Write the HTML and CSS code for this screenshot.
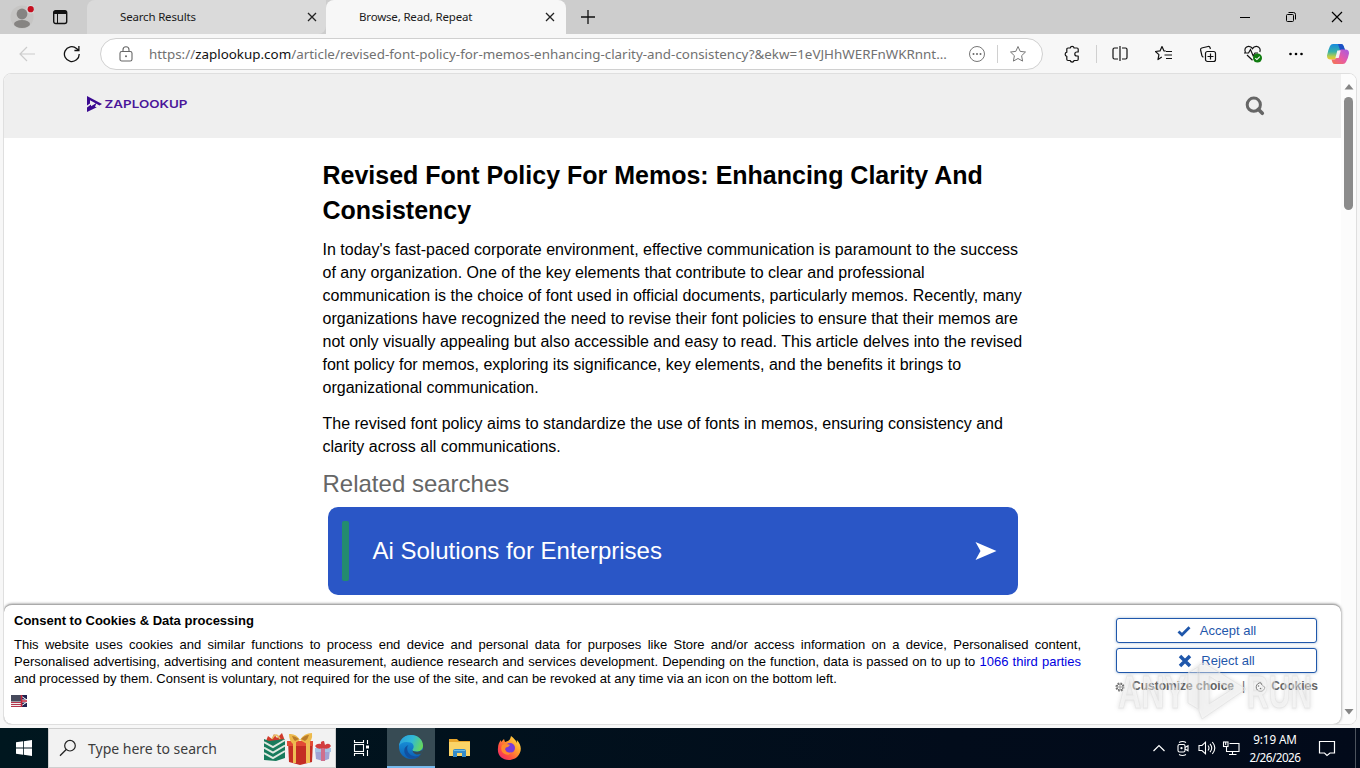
FILE: index.html
```html
<!DOCTYPE html>
<html lang="en">
<head>
    <meta charset="UTF-8">
    <meta name="viewport" content="width=device-width, initial-scale=1.0">
    <title>Browse, Read, Repeat</title>
    <link rel="stylesheet" href="styles.css">
</head>
<body>
    <div class="tabs">
        <div class="tabs-left">
            <svg class="profile" width="24" height="26" viewBox="0 0 24 26"><circle cx="12" cy="13" r="11.500" fill="#c6c5c4"/><circle cx="12" cy="10" r="5.400" fill="#868482"/><ellipse cx="12" cy="20" rx="8" ry="4" fill="#868482"/><circle cx="20.700" cy="5.200" r="4.200" fill="#dadada"/><circle cx="20.700" cy="5.200" r="3.100" fill="#c50f1f"/></svg>
            <svg width="16" height="16" viewBox="0 0 16 16"><rect x="1.700" y="1.700" width="13" height="12.800" rx="2" fill="none" stroke="#111" stroke-width="1.400"/><path d="M1.500 5V3.500q0-2 2-2h9.500q2 0 2 2V5z" fill="#111"/><path d="M5.500 5v9" stroke="#111"/></svg>
        </div>
        <div class="tab tab-idle">
            <span class="tab-title">Search Results</span>
            <svg width="10" height="10" viewBox="0 0 10 10"><path d="M1 1l8 8M9 1L1 9" stroke="#222" stroke-width="1.300"/></svg>
        </div>
        <div class="tab tab-active">
            <span class="tab-title">Browse, Read, Repeat</span>
            <svg width="10" height="10" viewBox="0 0 10 10"><path d="M1 1l8 8M9 1L1 9" stroke="#222" stroke-width="1.300"/></svg>
        </div>
        <div class="tabs-rest">
            <svg width="14" height="14" viewBox="0 0 14 14"><path d="M7 0v14M0 7h14" stroke="#111" stroke-width="1.300"/></svg>
        </div>
        <div class="window-buttons">
            <svg width="46" height="34" viewBox="0 0 46 34"><path d="M18 17.500h10" stroke="#000"/></svg>
            <svg width="46" height="34" viewBox="0 0 46 34"><rect x="18.500" y="14.500" width="7" height="7" rx="1" fill="none" stroke="#000"/><path d="M20.500 12.500h5q2 0 2 2v5" fill="none" stroke="#000"/></svg>
            <svg width="46" height="34" viewBox="0 0 46 34"><path d="M18 12l10 10M28 12L18 22" stroke="#000" stroke-width="1.200"/></svg>
        </div>
    </div>

    <div class="toolbar">
        <svg class="nav-icon" width="18" height="16" viewBox="0 0 18 16"><path d="M8 1L1 8l7 7M1.500 8H16" fill="none" stroke="#ccc" stroke-width="1.200"/></svg>
        <svg class="nav-icon" width="18" height="18" viewBox="0 0 18 18"><path d="M16.200 9A7.400 7.400 0 1 1 13.500 3.400L15.800 5.300M15.900 1v4.500h-4.500" fill="none" stroke="#111" stroke-width="1.300"/></svg>
        <div class="address">
            <svg width="14" height="16" viewBox="0 0 14 16"><rect x="1" y="5.500" width="12" height="9.500" rx="1.800" fill="none" stroke="#666" stroke-width="1.100"/><path d="M4 5.500V3.800a3 3 0 0 1 6 0v1.700" fill="none" stroke="#666" stroke-width="1.100"/><circle cx="7" cy="10.200" r="1" fill="#666"/></svg>
            <span class="url">https://<b>zaplookup.com</b>/article/revised-font-policy-for-memos-enhancing-clarity-and-consistency?&amp;ekw=1eVJHhWERFnWKRnnt...</span>
            <svg width="18" height="18" viewBox="0 0 18 18"><circle cx="9" cy="9" r="7.500" fill="none" stroke="#777"/><g fill="#666"><circle cx="5.500" cy="9" r="1"/><circle cx="9" cy="9" r="1"/><circle cx="12.500" cy="9" r="1"/></g></svg>
            <i class="divider"></i>
            <svg width="18" height="18" viewBox="0 0 18 18"><path d="M9 1.500l2.200 4.900 5.300.6-3.900 3.700 1 5.400L9 13.500l-4.600 2.600 1-5.400L1.500 7l5.300-.6z" fill="none" stroke="#777" stroke-linejoin="round"/></svg>
        </div>
        <div class="tools">
            <svg width="18" height="18" viewBox="0 0 18 18"><path d="M5 3h2.200a2 2 0 0 1 3.900 0H14q1.200 0 1.200 1.200V7h-1.400a2 2 0 0 0 0 4h1.400v3.300q0 1.200-1.200 1.200h-2.900a2 2 0 0 1-3.900 0H5q-1.200 0-1.200-1.200V11.300a2.100 2.100 0 0 1 0-4.100V4.200Q3.800 3 5 3z" fill="none" stroke="#111" stroke-width="1.200" stroke-linejoin="round"/></svg>
            <i class="divider"></i>
            <svg width="18" height="18" viewBox="0 0 18 18"><path d="M7 3H3.500Q2 3 2 4.500v8Q2 14 3.500 14H7M11 3h3.500Q16 3 16 4.500v8q0 1.500-1.500 1.500H11M9 1v15" fill="none" stroke="#111" stroke-width="1.200"/></svg>
            <svg width="18" height="18" viewBox="0 0 18 18"><path d="M10.800 6L8.900 5.800 7 1.500 5 5.900l-4.500.6 3.400 3.100-.9 5L6.800 12M11 6.500h6M9.500 10h7.500M11 13.500h6" fill="none" stroke="#111" stroke-width="1.200" stroke-linejoin="round"/></svg>
            <svg width="18" height="18" viewBox="0 0 18 18"><rect x="6.500" y="6.500" width="10" height="10" rx="2" fill="none" stroke="#111" stroke-width="1.200"/><path d="M11.500 8.500v6M8.500 11.500h6M4.500 12Q3.300 12 2.900 10.600L1.600 5Q1.200 3.400 2.700 3L9 1.500q1.600-.4 2.100 1.200l.3 1.300" fill="none" stroke="#111" stroke-width="1.200"/></svg>
            <svg class="health" width="20" height="20" viewBox="0 0 20 20"><path d="M2.400 8.500C1 5.500 2.500 2.500 5.500 2.300 7.700 2.200 9 3.700 9.500 4.600c.5-.9 1.900-2.400 4-2.300 3 .2 4.400 3 3.300 5.700M4 11l5.500 5.300M1 9h4.500l2-3.500 2.700 6.500 1.800-3h3" fill="none" stroke="#111" stroke-width="1.200"/><circle cx="14.500" cy="14" r="4.500" fill="#107c10"/><path d="M12.300 14.100l1.600 1.500 2.900-3" fill="none" stroke="#fff" stroke-width="1.100"/></svg>
            <svg width="18" height="18" viewBox="0 0 18 18"><circle cx="3.500" cy="9" r="1.300"/><circle cx="9" cy="9" r="1.300"/><circle cx="14.500" cy="9" r="1.300"/></svg>
            <svg class="copilot" width="24" height="22" viewBox="0 0 24 22">
                <defs>
                    <linearGradient id="cool" x1="0" y1="0" x2="0" y2="1"><stop offset="0" stop-color="#168adf"/><stop offset=".5" stop-color="#38b2a8"/><stop offset=".8" stop-color="#b7ce4c"/><stop offset="1" stop-color="#f5c431"/></linearGradient>
                    <linearGradient id="warm" x1="1" y1="0" x2="0" y2="1"><stop offset="0" stop-color="#a35be5"/><stop offset=".5" stop-color="#e65aa8"/><stop offset="1" stop-color="#f6784a"/></linearGradient>
                </defs>
                <path d="M7 1h8q2 0 2.600 2L19 7h-4q-2 0-2.600 2l-1.600 5q-.8 2.500-3 2.500H4.500Q.8 16.500 1 12.500 2 7 4 3q1-2 3-2z" fill="url(#cool)"/>
                <path d="M12 1h3q2 0 2.600 2L19 7h-5z" fill="#1c50c5"/>
                <path d="M17 21H9q-2 0-2.500-1.500l-1-3H8q2 0 2.700-2.200L12.500 9Q13 6.800 15 6.500h4.500q3.700 0 3.500 4Q22 16 20 19q-1 2-3 2z" fill="url(#warm)"/>
                <path d="M11.300 7.500h3.400l-2 7.500H9.400z" fill="#f5eff5"/>
            </svg>
        </div>
    </div>

    <div class="viewport">
        <div class="page">
            <header class="site-header">
                <svg width="102" height="18" viewBox="0 0 102 18">
                    <path d="M1 1l15 8-2.500 1.400L4 5.200v3.300L1 10.500zM1 17v-4.500l4-3v1.800l5.500-3.200-1.500 3.600 1.800.6z" fill="#3b0a91"/>
                    <text class="logo-text" x="18.500" y="12.800" textLength="83" lengthAdjust="spacingAndGlyphs">ZAPLOOKUP</text>
                </svg>
                <svg class="search-icon" width="20" height="20" viewBox="0 0 20 20"><circle cx="8.800" cy="8.700" r="6.600" fill="none" stroke="#666" stroke-width="3"/><path d="M13.300 13.300l4 4" stroke="#666" stroke-width="3.600" stroke-linecap="round"/></svg>
            </header>
            <main>
                <h1>Revised Font Policy For Memos: Enhancing Clarity And<br>Consistency</h1>
                <p>In today's fast-paced corporate environment, effective communication is paramount to the success<br>
                of any organization. One of the key elements that contribute to clear and professional<br>
                communication is the choice of font used in official documents, particularly memos. Recently, many<br>
                organizations have recognized the need to revise their font policies to ensure that their memos are<br>
                not only visually appealing but also accessible and easy to read. This article delves into the revised<br>
                font policy for memos, exploring its significance, key elements, and the benefits it brings to<br>
                organizational communication.</p>
                <p>The revised font policy aims to standardize the use of fonts in memos, ensuring consistency and<br>
                clarity across all communications.</p>
                <div class="related">Related searches</div>
                <a class="search-link">
                    <span class="link-bar"></span>
                    <span class="link-text">Ai Solutions for Enterprises</span>
                    <svg width="22" height="18" viewBox="0 0 22 18"><path d="M.5 0l21 9-21 9 5-9z" fill="#fff"/></svg>
                </a>
            </main>
        </div>
        <div class="scrollbar">
            <svg width="10" height="6" viewBox="0 0 10 6"><path d="M5 0l4.500 5.500h-9z" fill="#858585"/></svg>
            <span class="thumb"></span>
            <svg class="arrow-down" width="10" height="6" viewBox="0 0 10 6"><path d="M.5 0h9L5 5.500z" fill="#858585"/></svg>
        </div>

        <div class="consent">
            <div class="consent-text">
                <b>Consent to Cookies &amp; Data processing</b>
                <div class="consent-line">This website uses cookies and similar functions to process end device and personal data for purposes like Store and/or access information on a device, Personalised content,</div>
                <div class="consent-line">Personalised advertising, advertising and content measurement, audience research and services development. Depending on the function, data is passed on to up to <a>1066 third parties</a></div>
                <div>and processed by them. Consent is voluntary, not required for the use of the site, and can be revoked at any time via an icon on the bottom left.</div>
                <svg class="flag" width="16" height="12" viewBox="0 0 16 12"><rect width="16" height="12" fill="#eee"/><path d="M0 7.500h10M0 9.500h10M0 11.500h10" stroke="#b5354c"/><rect width="10" height="6.500" fill="#474a5c"/><rect x="10" width="6" height="12" fill="#20224f"/><path d="M10 1l6 4M10 11l6-4" stroke="#fff"/><path d="M10 6h6" stroke="#fff" stroke-width="3"/><path d="M10 6h6M10.500 0v12" stroke="#c52338" stroke-width="1.500"/></svg>
            </div>
            <div class="consent-buttons">
                <button><svg width="14" height="12" viewBox="0 0 14 12"><path d="M1.500 6.500L5 9.800l7.500-7.500" fill="none" stroke="#1f57ab" stroke-width="2.800"/></svg><span>Accept all</span></button>
                <button><svg width="14" height="14" viewBox="0 0 14 14"><path d="M2 2l10 10M12 2L2 12" stroke="#1f57ab" stroke-width="3.500"/></svg><span>Reject all</span></button>
                <div class="choices">
                    <svg width="10" height="10" viewBox="0 0 10 10"><circle cx="5" cy="5" r="3.900" fill="none" stroke="#777" stroke-width="1.400" stroke-dasharray="1.800 1.260"/><circle cx="5" cy="5" r="3" fill="none" stroke="#777"/><circle cx="5" cy="5" r="1.200" fill="none" stroke="#777" stroke-width=".8"/></svg>
                    <span class="customize">Customize choice</span>
                    <span class="pipe">|</span>
                    <svg width="11" height="10" viewBox="0 0 11 10"><path d="M6 .8A4.300 4.300 0 1 0 9.800 5Q8.500 5 8 3.500 6.200 3 6 .8z" fill="none" stroke="#777"/><circle cx="3.500" cy="4" r=".8" fill="#777"/><circle cx="5.500" cy="6.500" r=".8" fill="#777"/></svg>
                    <span class="cookies">Cookies</span>
                </div>
            </div>
        </div>
    </div>

    <div class="taskbar">
        <div class="start"><svg width="16" height="16" viewBox="0 0 16 16"><path d="M0 2.300l7-1v6.300H0zM7.800 1.200L16 0v7.600H7.800zM0 8.400h7v6.300l-7-1zM7.800 8.400H16V16l-8.200-1.200z" fill="#fff"/></svg></div>
        <div class="task-search">
            <svg width="18" height="18" viewBox="0 0 18 18"><circle cx="11" cy="6.700" r="5.300" fill="none" stroke="#222" stroke-width="1.200"/><path d="M7.200 10.500L1 16.800" stroke="#222" stroke-width="1.300"/></svg>
            <span>Type here to search</span>
            <svg class="gifts" width="68" height="36" viewBox="0 0 68 36">
                <path d="M2 11l2-5 4 3 2-5 3 4 5-5 3 8z" fill="#d13b2c"/><path d="M8 9q4-8 8 0" fill="none" stroke="#e9bd64" stroke-width="1.500"/>
                <path d="M0 9l5 2 16-2v19l-9 3-12-1z" fill="#177b5c"/>
                <path d="M0 12l9 5 12-7M0 17.500l9 5 12-7M0 23l9 5 12-7" fill="none" stroke="#dfe9e0" stroke-width="2"/>
                <path d="M24 11h25l-1 21-12 3-11-3z" fill="#c42d24"/><path d="M23 11h26v5H23z" fill="#e24b35"/><path d="M29 11h3v22h-3zM42 11h4v22h-4z" fill="#eebd54"/>
                <path d="M36 10Q32 3 25 4q0 7 4 10zM36 10q4-7 12-7 1 8-5 11z" fill="#edba4c"/><path d="M35 9q-4-3-7-3 1 3 3 5zM37 9q4-4 8-4-1 4-4 6z" fill="#b97c2b"/>
                <path d="M51 19h15l-1 10-6 2-7-2z" fill="#9fa3d4"/><path d="M51 18h16v4H51z" fill="#a6c3e4"/><path d="M57 18h4v13h-4z" fill="#cf6f8c"/><path d="M59 18q-6 2-8-2 2-3 6-2-1-3 3-3l1 4q4-3 6 1-2 4-8 2z" fill="#d23d3f"/>
            </svg>
        </div>
        <div class="task-item"><svg width="18" height="18" viewBox="0 0 18 18" fill="none" stroke="#fff" stroke-width="1.100"><path d="M2.500 1v2.500h9V1M2.500 17v-2.500h9V17M15.500 1v4M15.500 11v6"/><rect x="2.500" y="5.500" width="9" height="7"/><path d="M14 6.500h3v3h-3z" fill="#fff" stroke="none"/></svg></div>
        <div class="task-item task-current">
            <svg width="26" height="26" viewBox="0 0 26 26">
                <defs><linearGradient id="edgeTop" x1="0" y1=".3" x2="1" y2=".6"><stop offset="0" stop-color="#2aa0dc"/><stop offset=".5" stop-color="#31b9d6"/><stop offset="1" stop-color="#68d858"/></linearGradient><linearGradient id="edgeSide" x1="0" y1="0" x2="0" y2="1"><stop offset="0" stop-color="#1b9de2"/><stop offset="1" stop-color="#0c5fb4"/></linearGradient></defs>
                <circle cx="13" cy="13" r="12" fill="url(#edgeSide)"/>
                <path d="M1 12C2 4 8 1 13 1c7 0 12 5 12 10.500 0 4-3 6-6.500 6-3 0-4.500-1-4-2 2-2 1.500-6-2-7C7 7 3 8.500 1 12z" fill="url(#edgeTop)"/>
                <path d="M10.500 11c-3 3-1 11 7 11.500 2 0 4-1 5.500-2-4 5-11 6-15 1-3-4-2-9 2.500-10.500z" fill="#12509f"/>
                <path d="M14.500 15.500c-1 2 5 4 10.500 0l-1.500 4c-4 2-9 1-9-4z" fill="#374b54"/>
            </svg>
        </div>
        <div class="task-item"><svg width="24" height="20" viewBox="0 0 24 20"><path d="M1 1h8l2 2h11v14H1z" fill="#e9a62b"/><path d="M1 4h21v14H1z" fill="#fbd467"/><path d="M5 19v-6q0-2 2-2h9q2 0 2 2v6h-4v-4H9v4z" fill="#348bc8"/><path d="M6 12.500h11" stroke="#6bbce8"/></svg></div>
        <div class="task-item"><svg width="24" height="24" viewBox="0 0 24 24">
            <defs><linearGradient id="fox" x1="1" y1="0" x2="0" y2="1"><stop offset="0" stop-color="#fff14c"/><stop offset=".4" stop-color="#ff9a2e"/><stop offset=".7" stop-color="#ff4b42"/><stop offset="1" stop-color="#e52278"/></linearGradient></defs>
            <path d="M14 0c3 2 4 4 5 5l1 2-.2-3c4 4 5 9 3 13-2 5-7 7-11 7C5 24 0 19 1 12c0-3 1-6 3-8v2l3-3 1 3c3-1 5-1 6-6z" fill="url(#fox)"/><circle cx="13" cy="12" r="5" fill="#783bda"/><path d="M5 9q4-2 8 0l-2 2q-3 0-3 3 2 4 7 2-4 5-9 1-3-3-1-8z" fill="#ff8b2c"/></svg></div>
        <div class="tray">
            <svg width="14" height="14" viewBox="0 0 14 14"><path d="M1.500 10L7 4.500l5.500 5.500" fill="none" stroke="#fff" stroke-width="1.200"/></svg>
            <svg class="tray-camera" width="14" height="18" viewBox="0 0 14 18" fill="none" stroke="#fff" stroke-width="1.100"><rect x="2" y="5.500" width="7" height="7.500" rx="1.500"/><path d="M9 8.500l3-1.700v5L9 10M3 3.500q3.500-2 7 0M3 15.500q3.500 2 7 0"/><circle cx="5.500" cy="9.200" r=".6"/></svg>
            <svg class="tray-sound" width="18" height="16" viewBox="0 0 18 16" fill="none" stroke="#fff" stroke-width="1.100"><path d="M1 5.500h3l3.500-3.300v11.600L4 10.500H1zM10 5.500q2 2.500 0 5M12 3.800q3.500 4.200 0 8.400M14.300 2q5 6 0 12"/></svg>
            <svg class="tray-network" width="18" height="18" viewBox="0 0 18 18" fill="none" stroke="#fff" stroke-width="1.100"><path d="M7.500 4.500H17v8H4.500V8M10.500 12.500v3M7 15.500h7.500"/><rect x="1.500" y="3" width="4.500" height="4.500"/><path d="M3.700 3v3"/></svg>
            <div class="clock"><span class="time">9:19 AM</span><span>2/26/2026</span></div>
            <svg width="18" height="18" viewBox="0 0 18 18"><path d="M1.500 2.500h15v11.500h-4.500L9 16.500 6.500 14h-5z" fill="none" stroke="#fff" stroke-width="1.200"/></svg>
        </div>
        <span class="show-desktop"></span>
    </div>

    <svg class="watermark" width="200" height="66" viewBox="0 0 200 66">
        <text x="2" y="49" textLength="68" lengthAdjust="spacingAndGlyphs">ANY</text>
        <path d="M72 14l10-6v42l-10-6z"/>
        <path fill-rule="evenodd" d="M88 4l42 26-44 30-3-8V6zM93 17v28l22-14z"/>
        <text x="131" y="49" textLength="65" lengthAdjust="spacingAndGlyphs">RUN</text>
    </svg>
</body>
</html>
```
FILE: styles.css
```css
* {
    box-sizing: border-box;
}

body {
    margin: 0;
    width: 1360px;
    height: 768px;
    overflow: hidden;
    position: relative;
    font-family: "Liberation Sans", Arial, sans-serif;
    background-color: #f7f7f7;
    display: flex;
    flex-direction: column;
}

svg {
    display: block;
    flex-shrink: 0;
}

/* tab strip */
.tabs {
    height: 34px;
    background-color: #cdcdcd;
    display: flex;
    font-family: "Noto Sans", sans-serif;
}

.tabs-left {
    width: 87px;
    display: flex;
    align-items: center;
    gap: 18px;
    padding-left: 10px;
}

.tab {
    display: flex;
    align-items: center;
    justify-content: space-between;
}

.tab-idle {
    width: 239px;
    padding: 0 9px 0 33px;
    background-color: #dadada;
    border-radius: 8px 0 8px 0;
}

.tab-active {
    width: 240px;
    padding: 0 11px 0 33px;
    background-color: #f7f7f7;
    border-radius: 8px 8px 0 0;
}

.tab-title {
    font-size: 11.5px;
    letter-spacing: -0.18px;
    color: #1b1b1b;
    white-space: nowrap;
    margin-top: -1px;
}

.tabs-rest {
    flex: 1;
    display: flex;
    align-items: center;
    padding-left: 15px;
}

.window-buttons {
    display: flex;
}

/* toolbar */
.toolbar {
    height: 39px;
    display: flex;
    align-items: center;
    padding-left: 19px;
}

.nav-icon {
    margin-right: 26px;
}

.address {
    width: 943px;
    height: 32px;
    background-color: #fff;
    border: 1px solid #d0d0d0;
    border-radius: 16px;
    display: flex;
    align-items: center;
    padding: 0 14px 0 18px;
}

.nav-icon + .address {
    margin-left: -7px;
}

.url {
    width: 804px;
    margin: 0 15px 0 16px;
    font-family: "Noto Sans", sans-serif;
    font-size: 13.4px;
    color: #717171;
    white-space: nowrap;
}

.url b {
    font-weight: normal;
    color: #111;
}

.divider {
    width: 1px;
    height: 18px;
    background-color: #d0d0d0;
}

.address .divider {
    margin: 0 11px;
}

.tools {
    display: flex;
    align-items: center;
    gap: 26px;
    padding-left: 20px;
}

.tools .divider {
    margin: 0 -11.5px;
}

.health {
    margin-right: -2px;
}

.copilot {
    margin-left: -5px;
}

/* web page area */
.viewport {
    position: relative;
    height: 652px;
    margin: 0 3px;
    border: 1px solid #dfdfdf;
    border-radius: 8px;
    overflow: hidden;
    background-color: #fff;
    display: flex;
}

.page {
    width: 1337px;
}

.site-header {
    height: 64px;
    background-color: #efefef;
    display: flex;
    justify-content: space-between;
    padding: 21px 76px 0 82px;
}

.logo-text {
    font-family: Inter, sans-serif;
    font-size: 10.5px;
    font-weight: 600;
    fill: #4b169a;
}

.search-icon {
    margin-top: 1px;
}

main {
    width: 704px;
    margin-left: 318.5px;
    padding-top: 20px;
    white-space: nowrap;
}

h1 {
    margin: 0;
    font-size: 25px;
    line-height: 35px;
    color: #000;
}

p {
    margin: 0 0 13px;
    font-size: 16px;
    line-height: 23px;
    color: #000;
}

h1 + p {
    margin-top: 10px;
}

.related {
    font-size: 24px;
    line-height: 30px;
    color: #666;
    margin-top: -2px;
}

.search-link {
    width: 690px;
    height: 88px;
    margin: 8px 0 0 5px;
    padding: 0 21px 0 14px;
    border-radius: 10px;
    background-color: #2a56c6;
    display: flex;
    align-items: center;
}

.link-bar {
    width: 7px;
    height: 60px;
    border-radius: 2px;
    background-color: #238b6f;
}

.link-text {
    flex: 1;
    margin-left: 24px;
    font-size: 24px;
    color: #fff;
}

.scrollbar {
    width: 15px;
    background-color: #fcfcfc;
    display: flex;
    flex-direction: column;
    align-items: center;
    padding: 10px 0 9px;
}

.thumb {
    width: 9px;
    height: 113px;
    margin-top: 7px;
    border-radius: 5px;
    background-color: #8b8b8b;
}

.arrow-down {
    margin-top: auto;
}

/* consent bar lies over the page */
.consent {
    position: absolute;
    left: 0;
    bottom: 0;
    width: 1337px;
    height: 120px;
    background-color: #fff;
    border-top: 1px solid #aaa;
    border-radius: 8px;
    box-shadow: 0 0 3px #777;
    display: flex;
    padding: 7px 20px 0 10px;
    font-size: 13px;
    line-height: 17px;
    color: #000;
}

.consent-text {
    width: 1067px;
    flex-shrink: 0;
    white-space: nowrap;
}

.consent-text b {
    display: block;
    margin-bottom: 7px;
}

.consent-line {
    white-space: normal;
    text-align-last: justify;
}

.consent a {
    color: #0000e0;
}

.flag {
    margin: 8px 0 0 -3px;
}

.consent-buttons {
    margin-left: 34px;
    padding-top: 6px;
    width: 206px;
    flex-shrink: 0;
}

.consent-buttons button {
    width: 201px;
    height: 25px;
    margin: 0 0 5px 1px;
    padding: 0;
    display: flex;
    align-items: center;
    justify-content: center;
    gap: 9px;
    font-family: "Liberation Sans", Arial, sans-serif;
    font-size: 13px;
    color: #1f57ab;
    background-color: #fff;
    border: 1px solid #1f57ab;
    border-radius: 3px;
    box-shadow: 0 0 3px #9ab4d0;
}

.choices {
    display: flex;
    align-items: center;
    font-size: 12px;
    font-weight: bold;
    color: #666;
    white-space: nowrap;
    margin-top: 2px;
}

.customize {
    margin-left: 7px;
}

.pipe {
    margin: 0 10px 0 8px;
    font-weight: normal;
}

.cookies {
    margin-left: 5px;
}

/* taskbar */
.taskbar {
    height: 40px;
    margin-top: 3px;
    background: linear-gradient(90deg, #00171f, #020c1b 70%, #020a1a);
    display: flex;
    font-family: "Noto Sans", sans-serif;
}

.start {
    width: 48px;
    display: flex;
    align-items: center;
    justify-content: center;
}

.task-search {
    width: 288px;
    background-color: #f2f2f2;
    border: 1px solid #cfcfcf;
    display: flex;
    align-items: center;
    padding: 0 3px 0 10px;
    font-size: 14px;
    color: #3d3d3d;
}

.task-search span {
    margin-left: 11px;
    white-space: nowrap;
}

.gifts {
    margin-left: auto;
}

.task-item {
    width: 49px;
    display: flex;
    align-items: center;
    justify-content: center;
}

.task-current {
    width: 48px;
    margin-left: 2px;
    background-color: #374b54;
    border-bottom: 2px solid #76b9ed;
}

.tray {
    margin-left: auto;
    display: flex;
    align-items: center;
    padding-right: 19px;
    color: #fff;
}

.tray-camera {
    margin-left: 10px;
}

.tray-sound {
    margin-left: 8px;
}

.tray-network {
    margin-left: 6px;
}

.clock {
    width: 62px;
    margin: 0 12px 0 4px;
    display: flex;
    flex-direction: column;
    align-items: center;
    font-size: 11.7px;
    line-height: 18px;
    letter-spacing: -0.5px;
    white-space: nowrap;
}

.time {
    letter-spacing: -0.1px;
}

.show-desktop {
    width: 5px;
    border-left: 1px solid #4c535d;
}

/* recorder mark over everything */
.watermark {
    position: absolute;
    left: 1116px;
    top: 659px;
    fill: rgba(255, 255, 255, 0.4);
    stroke: rgba(225, 225, 225, 0.7);
    stroke-width: 1;
    font-size: 46px;
    font-weight: bold;
    filter: drop-shadow(0 0 2px rgba(90, 90, 90, 0.35));
}
```
